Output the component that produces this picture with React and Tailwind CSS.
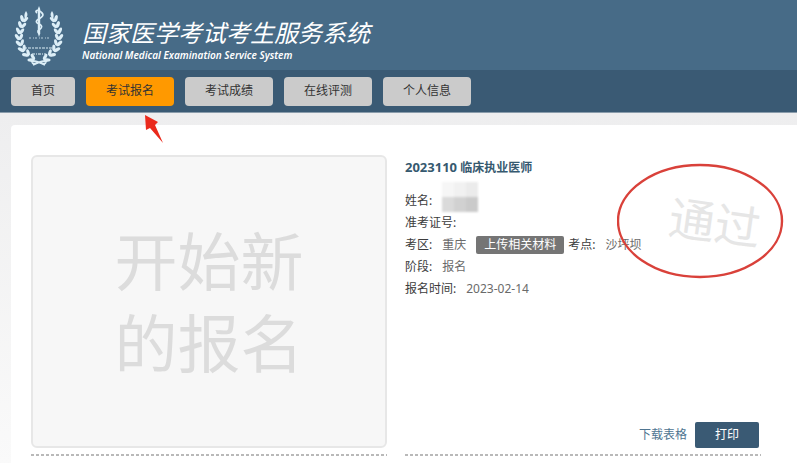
import React, { useState } from 'react';

const navItems = [
    { key: 'home', label: '首页' },
    { key: 'signup', label: '考试报名' },
    { key: 'score', label: '考试成绩' },
    { key: 'review', label: '在线评测' },
    { key: 'profile', label: '个人信息' },
];

// Leaves of the left branch, bottom to top: position and angle
const leaves = [
    [17, 55, 60], [12, 50, 45], [8, 45, 30], [6, 39, 14],
    [5, 33, 2], [6, 27, -8], [8, 21, -14], [10, 15, -18],
];

function Branch() {
    return (
        <g>
            {leaves.map(([x, y, angle]) => (
                <g key={y} transform={`translate(${x} ${y}) rotate(${-angle})`}>
                    <ellipse cx="-2" cy="0" rx="1.7" ry="3.6" transform="rotate(-32)" />
                    <ellipse cx="2.2" cy="0" rx="1.6" ry="3.3" transform="rotate(28)" />
                </g>
            ))}
            <path d="M12 8 C10 11 10 13 11 16 C14 13 14 11 12 8Z" />
            <path d="M17 59 C22 57 25 59 31 62 M18 60 C20 61 22 61 25 59" fill="none" stroke="currentColor" strokeWidth="1.7" />
        </g>
    );
}

function Logo() {
    return (
        <svg viewBox="0 0 50 64" className="h-16 w-[50px] shrink-0 text-[#dceef7]" fill="currentColor" aria-hidden="true">
            <Branch />
            <g transform="translate(50 0) scale(-1 1)">
                <Branch />
            </g>
            <path d="M25 3 L26.2 6 V30 L25 34 L23.8 30 V6Z" />
            <path d="M23 10 C20 8 24 6 27 9 C31 12 28 14 25 16 C21 18 22 20 25 21 C29 23 28 25 25 27 C23 28 24 30 26 31" fill="none" stroke="currentColor" strokeWidth="1.7" />
            <path d="M15 35 H36" stroke="currentColor" strokeWidth="1.4" strokeDasharray="2 2 1 1" opacity="0.5" />
            <path d="M11 45 H39" stroke="currentColor" strokeWidth="2" strokeDasharray="2 1 3 1" opacity="0.5" />
            <path d="M18 51 H32" stroke="currentColor" strokeWidth="2" strokeDasharray="3 1 1 1" opacity="0.55" />
        </svg>
    );
}

function Field({ label, children }) {
    return (
        <div className="flex items-center">
            <dt className="text-[#3c3c3c]">{label}</dt>
            <dd className="ml-2.5 text-[#6a6a6a]">{children}</dd>
        </div>
    );
}

function Divider() {
    return <div className="mt-1.5 h-0.5 bg-[repeating-linear-gradient(90deg,#b9b9b9_0_3px,transparent_3px_5px)]" />;
}

export default function App() {
    const [active, setActive] = useState('signup');

    return (
        <div className="min-h-screen bg-white pr-1.5 font-['Noto_Sans','Noto_Sans_CJK_SC',sans-serif] text-xs">
            <header className="flex h-[70px] items-center gap-4.5 bg-[#476b87] pl-3.5">
                <Logo />
                <div className="pt-2 text-white italic">
                    <h1 className="text-2xl leading-8">国家医学考试考生服务系统</h1>
                    <p className="text-[10px] leading-3 font-semibold">National Medical Examination Service System</p>
                </div>
            </header>

            <nav className="flex h-[43px] items-center gap-[11px] border-b border-[#8a9cab] bg-[#3a5a74] pl-[11px]">
                {navItems.map((item) => (
                    <div key={item.key} className="relative">
                        <button
                            onClick={() => setActive(item.key)}
                            className={`h-[29px] rounded px-5 text-[#333] ${active === item.key ? 'bg-[#ff9900]' : 'bg-[#cbcbcb]'}`}
                        >
                            {item.label}
                        </button>
                        {item.key === 'signup' && (
                            <svg viewBox="0 0 20 30" className="absolute top-9 left-[58px] z-10 h-[30px] w-5" aria-hidden="true">
                                <path d="M1 2 L14 9 L11 12 L19 30 L6 15 L2 17Z" fill="#ea2a1c" />
                            </svg>
                        )}
                    </div>
                ))}
            </nav>

            <main className="bg-linear-to-b from-[#eeeeef] to-[#fafafa] pt-3 pl-[11px]">
                <div className="grid grid-cols-2 gap-[18px] rounded-tl bg-white pt-[30px] pr-9 pb-2 pl-5">
                    <section>
                        <button className="block h-[293px] w-full rounded-md border-2 border-[#e7e7e7] bg-[#f7f7f7] text-[63px] leading-[82px] text-[#dcdcdc]">
                            开始新<br />的报名
                        </button>
                        <Divider />
                    </section>

                    <section className="relative flex flex-col">
                        <h2 className="leading-6 font-bold text-[#36596f]">
                            <span className="text-[13px]">2023110</span> 临床执业医师
                        </h2>
                        <dl className="mt-2.5 leading-[22px]">
                            <Field label="姓名:">
                                <span className="relative block h-[22px] w-9">
                                    <span className="absolute bottom-0 grid h-[30px] w-9 grid-cols-3 grid-rows-2 blur-[1px]">
                                        <i className="bg-[#f6f6f6]" /><i className="bg-[#f1f1f1]" /><i className="bg-[#ebebeb]" />
                                        <i className="bg-[#dadada]" /><i className="bg-[#d1d1d1]" /><i className="bg-[#cacaca]" />
                                    </span>
                                </span>
                            </Field>
                            <Field label="准考证号:" />
                            <div className="flex items-center">
                                <Field label="考区:">重庆</Field>
                                <button className="mr-1 ml-2.5 h-[18px] rounded-xs bg-[#757575] px-2 leading-[18px] text-white">上传相关材料</button>
                                <Field label="考点:">沙坪坝</Field>
                            </div>
                            <Field label="阶段:">报名</Field>
                            <Field label="报名时间:">2023-02-14</Field>
                        </dl>
                        <div className="mt-auto flex items-center justify-end gap-2 pr-0.5">
                            <a href="#download" className="text-[#4f7591]">下载表格</a>
                            <button className="h-[26px] rounded-xs bg-[#3a5a74] px-5 text-white">打印</button>
                        </div>
                        <Divider />

                        <div className="absolute top-2 -right-6 flex h-[116px] w-[168px] items-center justify-center">
                            <span className="rotate-8 pl-7 text-[46px] text-[#e6e6e6]">通过</span>
                            <svg viewBox="0 0 168 116" className="absolute inset-0" aria-hidden="true">
                                <ellipse cx="83" cy="58" rx="82" ry="56" fill="none" stroke="#d9413a" strokeWidth="2.4" />
                            </svg>
                        </div>
                    </section>
                </div>
            </main>
        </div>
    );
}
